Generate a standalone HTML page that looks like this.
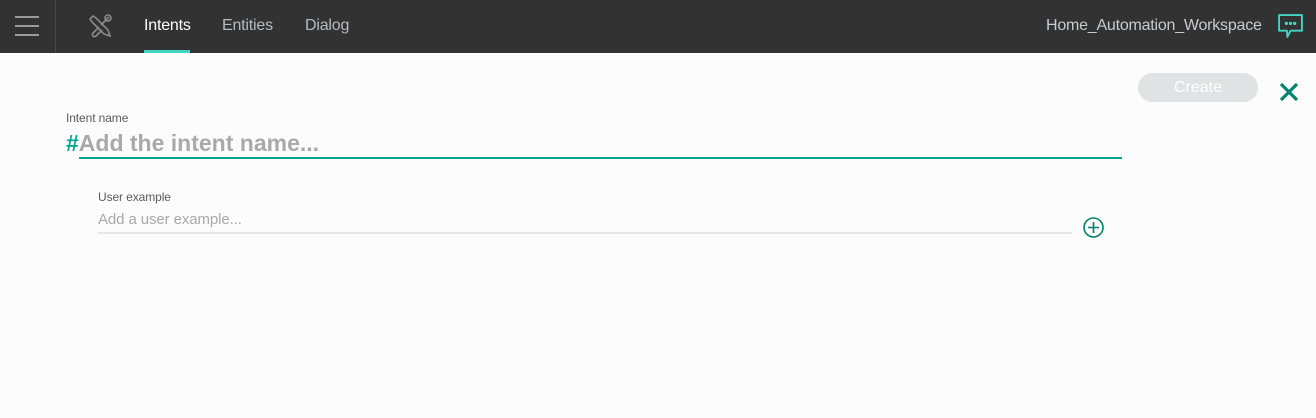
<!DOCTYPE html>
<html><head><style>
*{margin:0;padding:0;box-sizing:border-box}
body{width:1316px;height:418px;background:#fcfcfc;font-family:"Liberation Sans",sans-serif;position:relative;overflow:hidden}
.top{position:absolute;left:0;top:0;width:1316px;height:53px;background:#323232}
.sep{position:absolute;left:55px;top:0;width:1px;height:53px;background:#4a4a4a}
.ham span{position:absolute;left:15px;width:24px;height:2px;background:#9a9a9a}
.nav{position:absolute;top:17px;font-size:16px;color:#b4bcc2;letter-spacing:-0.2px}
.abs{position:absolute}
</style></head><body>
<div class="top">
 <div class="ham"><span style="top:16px"></span><span style="top:25px"></span><span style="top:34px"></span></div>
 <div class="sep"></div>
 <svg class="abs" style="left:87px;top:13px" width="26" height="26" viewBox="0 0 26 26" fill="none" stroke="#8a8a8a" stroke-width="1.6">
  <path d="M3 6 L6 3 L9 5 L21 17 L23 23 L17 21 L5 9 Z"/>
  <path d="M22 4 L14 12 M12 14 L6 20 a2 2 0 0 0 3 3 L15 17"/>
  <circle cx="21" cy="5" r="3"/>
 </svg>
 <div class="nav" style="left:144px;color:#fff">Intents</div>
 <div class="abs" style="left:144px;top:50px;width:46px;height:3px;background:#41d6c3"></div>
 <div class="nav" style="left:222px">Entities</div>
 <div class="nav" style="left:305px">Dialog</div>
 <div class="nav" style="left:1046px;color:#c6ccd0;letter-spacing:-0.22px">Home_Automation_Workspace</div>
 <svg class="abs" style="left:1277px;top:12px" width="27" height="27" viewBox="0 0 26 26" fill="none" stroke="#41d6c3" stroke-width="1.8">
  <path d="M2 3 H24 V18 H13 L10 24 L9.5 18 H2 Z" stroke-linejoin="round"/>
  <circle cx="9" cy="11" r=".7" fill="#41d6c3"/><circle cx="13" cy="11" r=".7" fill="#41d6c3"/><circle cx="17" cy="11" r=".7" fill="#41d6c3"/>
 </svg>
</div>
<div class="abs" style="left:1138px;top:73px;width:120px;height:29px;border-radius:15px;background:#dfe3e3;color:#fff;font-size:16px;text-align:center;line-height:29px">Create</div>
<svg class="abs" style="left:1279px;top:82px" width="20" height="20" viewBox="0 0 20 20" stroke="#008571" stroke-width="3.2"><path d="M2 2 L18 18 M18 2 L2 18"/></svg>
<div class="abs" style="left:66px;top:111px;font-size:12px;color:#5a5a5a;letter-spacing:-0.1px">Intent name</div>
<div class="abs" style="left:66px;top:130px;font-size:23px;font-weight:bold;color:#a9a9a9;letter-spacing:0px"><span style="color:#00a68f">#</span>Add the intent name...</div>
<div class="abs" style="left:79px;top:157px;width:1043px;height:2px;background:#00a68f"></div>
<div class="abs" style="left:98px;top:190px;font-size:12px;color:#5a5a5a;letter-spacing:-0.1px">User example</div>
<div class="abs" style="left:98px;top:211px;font-size:15px;color:#a9a9a9;letter-spacing:-0.1px">Add a user example...</div>
<div class="abs" style="left:98px;top:232px;width:974px;height:2px;background:#e3e8e8"></div>
<svg class="abs" style="left:1082px;top:216px" width="23" height="23" viewBox="0 0 23 23" fill="none" stroke="#00806e" stroke-width="1.6"><circle cx="11.5" cy="11.5" r="9.5"/><path d="M11.5 6 V17 M6 11.5 H17"/></svg>
</body></html>
